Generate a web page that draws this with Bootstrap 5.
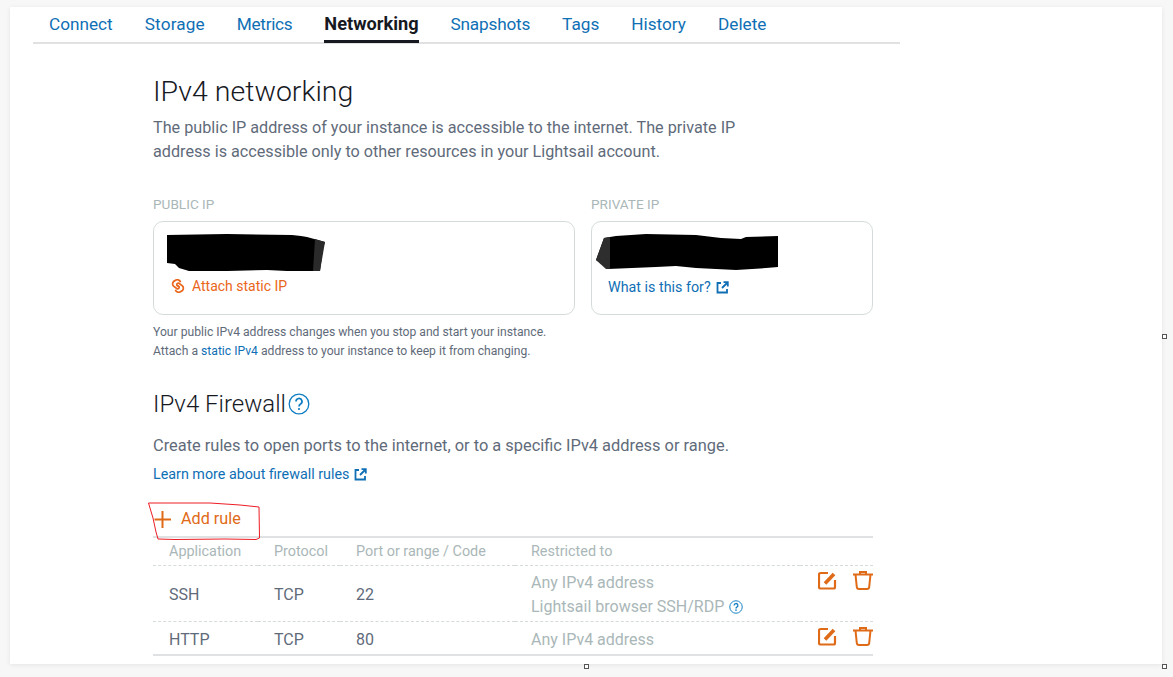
<!doctype html>
<html lang="en">
<head>
<meta charset="utf-8">
<title>Networking</title>
<link href="https://cdn.jsdelivr.net/npm/bootstrap@5.3.0/dist/css/bootstrap.min.css" rel="stylesheet">
<style>
html,body{height:100%;overflow:hidden}
body{background:#f7f7f7;font-family:Roboto,"Liberation Sans",sans-serif;color:#5f6b7a;position:relative}
.sheet{position:absolute;left:10px;top:7px;width:1152px;height:657px;background:#fff;box-shadow:0 1px 5px rgba(0,0,0,.08);overflow:hidden}
.tabbar{width:867px;margin-left:23px;height:37px;border-bottom:2px solid #dfe1e3}
.tabbar a{display:block;height:36px;margin:0 16px;font-size:17.2px;line-height:22px;padding-top:6px;color:#0f6fb5;text-decoration:none;white-space:nowrap}
.tabbar a:nth-child(2){letter-spacing:.15px}
.tabbar a:nth-child(3){letter-spacing:-.3px}
.tabbar a:nth-child(5){letter-spacing:-.2px}
.tabbar a.on{color:#16191f;font-weight:700;font-size:18.2px;border-bottom:3px solid #16191f}
.mainbox{width:720px;margin-left:143px}
.big-title{font-size:28.5px;font-weight:300;color:#16191f;line-height:36px;margin:30px 0 0}
.intro{font-size:16.2px;line-height:24px;color:#5f6b7a;width:600px;margin:6px 0 0}
.iplabel{font-size:13.6px;color:#aab7b8;line-height:18px;margin-bottom:8px}
.ipcard{height:94px;border:1px solid #d5dbdb;border-radius:10px;padding:12px 17px 0;position:relative}
.ipcard svg.redact{display:block}
.minilink{font-size:14px;line-height:18px;color:#e9661a;text-decoration:none}
.bluelink{font-size:14.3px;line-height:18px;color:#0f6fb5;text-decoration:none}
.note{font-size:12.15px;line-height:19px;color:#5f6b7a;margin:8px 0 0}
.note a{color:#0f6fb5;text-decoration:none}
.sub-title{font-size:24px;font-weight:300;color:#16191f;line-height:28px;margin:0}
.fwtext{font-size:16.4px;line-height:22px;margin:17px 0 0}
.addbtn{color:#df6a17;font-size:16.2px;line-height:22px;text-decoration:none;margin-top:19px;height:34px}
.fwtable{width:720px;table-layout:fixed;border-collapse:collapse;margin:0;font-size:16px}
.fwtable th,.fwtable td{padding:4px 0 0 16px;border:0;vertical-align:middle;color:#5f6b7a;background:transparent;box-shadow:none}
.fwtable thead th{font-weight:400;font-size:14.4px;color:#aab7b8;height:28px;padding-top:2px;border-top:2px solid #dfe1e3;border-bottom:1px dashed #d5dbdb}
.fwtable tbody tr.r1 td{height:56px;border-bottom:1px dashed #d5dbdb}
.fwtable tbody tr.r2 td{height:34px;border-bottom:2px solid #dfe1e3}
.fwtable td.dim{color:#aab7b8;line-height:24px}
.fwtable td.acts{padding:0;vertical-align:top}
.actwrap{padding-top:5px}
.overlay-ink{position:absolute;left:0;top:0;pointer-events:none}
.handle{position:absolute;width:5px;height:5px;background:#fff;border:1px solid #555}
</style>
</head>
<body>
<div class="sheet">
  <nav class="tabbar d-flex">
    <a href="#">Connect</a><a href="#">Storage</a><a href="#">Metrics</a><a href="#" class="on">Networking</a><a href="#">Snapshots</a><a href="#">Tags</a><a href="#">History</a><a href="#">Delete</a>
  </nav>
  <div class="mainbox">
    <h1 class="big-title">IPv4 networking</h1>
    <p class="intro">The public IP address of your instance is accessible to the internet. The private IP address is accessible only to other resources in your Lightsail account.</p>
    <div class="d-flex gap-3" style="margin-top:31px">
      <div style="width:422px">
        <div class="iplabel">PUBLIC IP</div>
        <div class="ipcard">
          <svg class="redact" width="160" height="38" viewBox="0 0 160 38" style="margin-left:-4px"><path d="M0 1 L60 0 L125 1 L134 2 L140 3 L158 8 L156 14 L153 37 L120 37 L100 36 L60 37 L22 37 L12 34 L8 30 L0 29 Z" fill="#000"/><path d="M148 5 L158 8 L153 37 L146 37 Z" fill="#2a2a2a"/></svg>
          <a href="#" class="minilink d-flex align-items-center" style="margin-top:5px">
            <svg width="14" height="14" viewBox="0 0 14 14" fill="none" stroke="#e9661a" stroke-width="1.7" style="margin-right:7px"><path d="M9.6 3.2 A3.4 3.4 0 0 0 4 1.6 A3.4 3.4 0 0 0 2.6 7.2 L6 9.8 A1.6 1.6 0 0 0 8 7.6 L6.8 6.6"/><path d="M4.4 10.8 A3.4 3.4 0 0 0 10 12.4 A3.4 3.4 0 0 0 11.4 6.8 L8 4.2 A1.6 1.6 0 0 0 6 6.4 L7.2 7.4"/></svg>Attach static IP</a>
        </div>
      </div>
      <div style="width:282px">
        <div class="iplabel">PRIVATE IP</div>
        <div class="ipcard">
          <svg class="redact" width="185" height="36" viewBox="0 0 185 36" style="margin-left:-13px"><path d="M8 4 L20 2 L50 0 L100 1 L125 4 L145 5 L150 3 L182 2 L182 33 L170 34 L140 36 L100 34 L80 32 L60 33 L12 35 L0 26 Z" fill="#000"/><path d="M8 4 L14 3 L14 35 L10 35 L0 26 Z" fill="#2e2e2e"/></svg>
          <a href="#" class="bluelink d-flex align-items-center" style="margin-top:8px;margin-left:-1px">What is this for?<svg width="13" height="13" viewBox="0 0 13 13" fill="none" stroke="#0f6fb5" stroke-width="1.8" style="margin-left:5px"><path d="M5 2 H1.5 V11.5 H11 V8"/><path d="M6 7 L11.5 1.5 M7.5 1.2 H11.8 V5.5"/></svg></a>
        </div>
      </div>
    </div>
    <p class="note">Your public IPv4 address changes when you stop and start your instance.<br>Attach a <a href="#">static IPv4</a> address to your instance to keep it from changing.</p>
    <div class="d-flex align-items-center" style="margin-top:29px">
      <h2 class="sub-title">IPv4 Firewall</h2>
      <svg width="22" height="22" viewBox="0 0 22 22" style="margin-left:2px"><circle cx="11" cy="11" r="9.8" fill="none" stroke="#0f7dc2" stroke-width="1.3"/><path d="M8 8.5 A3 3 0 1 1 12.3 11.2 C11.3 11.8 11 12.2 11 13.5" fill="none" stroke="#0f7dc2" stroke-width="1.7"/><circle cx="11" cy="16" r="1.1" fill="#0f7dc2"/></svg>
    </div>
    <p class="fwtext">Create rules to open ports to the internet, or to a specific IPv4 address or range.</p>
    <a href="#" class="bluelink d-flex align-items-center" style="margin-top:8px">Learn more about firewall rules<svg width="13" height="13" viewBox="0 0 13 13" fill="none" stroke="#0f6fb5" stroke-width="1.8" style="margin-left:5px"><path d="M5 2 H1.5 V11.5 H11 V8"/><path d="M6 7 L11.5 1.5 M7.5 1.2 H11.8 V5.5"/></svg></a>
    <a href="#" class="addbtn d-flex align-items-center">
      <svg width="19" height="19" viewBox="0 0 19 19" stroke="#df6a17" stroke-width="2" style="margin-right:9px"><path d="M9.5 1 V18 M1.5 9.5 H18"/></svg>Add rule</a>
    <table class="table fwtable">
      <colgroup><col style="width:105px"><col style="width:82px"><col style="width:175px"><col style="width:285px"><col style="width:73px"></colgroup>
      <thead><tr><th>Application</th><th>Protocol</th><th>Port or range / Code</th><th>Restricted to</th><th></th></tr></thead>
      <tbody>
        <tr class="r1"><td>SSH</td><td>TCP</td><td>22</td>
          <td class="dim">Any IPv4 address<br><span class="d-inline-flex align-items-center">Lightsail browser SSH/RDP<svg width="14" height="14" viewBox="0 0 22 22" style="margin-left:5px"><circle cx="11" cy="11" r="9.8" fill="none" stroke="#0f7dc2" stroke-width="1.5"/><path d="M8 8.5 A3 3 0 1 1 12.3 11.2 C11.3 11.8 11 12.2 11 13.5" fill="none" stroke="#0f7dc2" stroke-width="2"/><circle cx="11" cy="16" r="1.3" fill="#0f7dc2"/></svg></span></td>
          <td class="acts"><div class="actwrap d-flex justify-content-end gap-3">
            <svg width="19" height="19" viewBox="0 0 19 19" fill="none" stroke="#df6a17" stroke-width="2.2"><path d="M10 2 H2.5 Q1 2 1 3.5 V16 Q1 17.5 2.5 17.5 H15.5 Q17 17.5 17 16 V9"/><path d="M7 12.5 L16 3" stroke-width="3.6"/></svg>
            <svg width="20" height="19" viewBox="0 0 20 19" fill="none" stroke="#df6a17" stroke-width="2"><path d="M0 3.5 H20 M7 3.5 V1 H13 V3.5 M2.5 3.5 L3.8 16 Q4 18 6 18 H14 Q16 18 16.2 16 L17.5 3.5"/></svg>
          </div></td></tr>
        <tr class="r2"><td>HTTP</td><td>TCP</td><td>80</td><td class="dim">Any IPv4 address</td>
          <td class="acts"><div class="actwrap d-flex justify-content-end gap-3">
            <svg width="19" height="19" viewBox="0 0 19 19" fill="none" stroke="#df6a17" stroke-width="2.2"><path d="M10 2 H2.5 Q1 2 1 3.5 V16 Q1 17.5 2.5 17.5 H15.5 Q17 17.5 17 16 V9"/><path d="M7 12.5 L16 3" stroke-width="3.6"/></svg>
            <svg width="20" height="19" viewBox="0 0 20 19" fill="none" stroke="#df6a17" stroke-width="2"><path d="M0 3.5 H20 M7 3.5 V1 H13 V3.5 M2.5 3.5 L3.8 16 Q4 18 6 18 H14 Q16 18 16.2 16 L17.5 3.5"/></svg>
          </div></td></tr>
      </tbody>
    </table>
  </div>
</div>
<svg class="overlay-ink" width="1173" height="677" viewBox="0 0 1173 677"><path d="M148.5 503 L210 503 L240 505 L259 507 L259.5 538 L256 539.5 L225 539 L175 539.5 L158 539 L156 532 L153 518 Z" fill="none" stroke="#ed1c24" stroke-width="1"/></svg>
<span class="handle" style="left:1162px;top:334px"></span>
<span class="handle" style="left:1162px;top:664px"></span>
<span class="handle" style="left:584px;top:664px"></span>
</body>
</html>
